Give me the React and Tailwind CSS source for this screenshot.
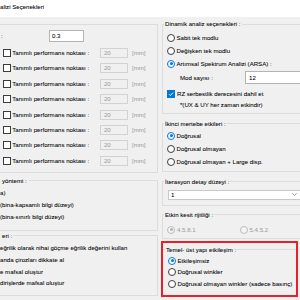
const LINE = "border-[#dcdcdc]";

function Radio({ checked = false, disabled = false }) {
  const ring = disabled
    ? "border-[#bcbcbc] bg-[#f4f4f4]"
    : checked
    ? "border-[#0078d7] bg-white"
    : "border-[#3c3c3c] bg-white";
  const dot = disabled ? "bg-[#b4b4b4]" : "bg-[#0078d7]";
  return (
    <span className={`flex h-[8px] w-[8px] shrink-0 items-center justify-center rounded-full border ${ring}`}>
      {checked && <span className={`h-[3px] w-[3px] rounded-full ${dot}`} />}
    </span>
  );
}

function Check({ checked = false }) {
  if (checked) {
    return (
      <span className="flex h-[8px] w-[8px] shrink-0 items-center justify-center bg-[#0078d7]">
        <svg width="6" height="6" viewBox="0 0 6 6">
          <path d="M1 3.2 L2.4 4.6 L5 1.6" fill="none" stroke="white" strokeWidth="0.9" />
        </svg>
      </span>
    );
  }
  return <span className="h-[8px] w-[8px] shrink-0 border border-[#3c3c3c] bg-white" />;
}

function PerfRow() {
  return (
    <div className="flex h-[15.4px] items-center pl-[3px]">
      <Check />
      <span className="ml-[1.3px] w-[87.7px] whitespace-nowrap">Tanımlı performans noktası :</span>
      <div className="flex h-[10px] w-[28px] items-center border border-[#d2d2d2] pl-[3px] text-[#a0a0a0]">20</div>
      <span className="ml-[4px] text-[#a0a0a0]">[mm]</span>
    </div>
  );
}

function RadioRow({ label, checked, h = "h-[12.8px]" }) {
  return (
    <div className={`flex ${h} items-center pl-[3px]`}>
      <Radio checked={checked} />
      <span className="ml-[1.5px] whitespace-nowrap">{label}</span>
    </div>
  );
}

export default function App() {
  return (
    <div className="h-[300px] w-[300px] overflow-hidden bg-[#f0f0f0] font-['Liberation_Sans',Arial,sans-serif] text-[6.1px] leading-none text-black [-webkit-text-stroke:0.05px_currentColor]">
      <div className="h-[17px] bg-white pt-[3px] leading-[7px]">alizi Seçenekleri</div>

      <div className="flex">
        {/* left column */}
        <div className="w-[158px] shrink-0">
          <div className={`mt-[7px] border-y border-r ${LINE} pt-[5px] pb-[3.5px]`}>
            <div className="flex h-[12px] items-center">
              <span className="w-[49px] pl-[1px]">:</span>
              <div className="flex h-[12px] w-[35px] items-center border border-[#b4b4b4] bg-white pl-[2px]">0.3</div>
            </div>
            <div className="mt-[3.3px]">
              {Array.from({ length: 8 }).map((_, i) => (
                <PerfRow key={i} />
              ))}
            </div>
          </div>

          <fieldset className={`mt-[3px] border-y border-r border-l-0 ${LINE} pt-[1.5px] pb-[6.5px]`}>
            <legend className="pl-[2px] pr-[2px] leading-[10px]">yöntemi :</legend>
            <div className="flex h-[12px] items-center">a)</div>
            <div className="flex h-[12px] items-center whitespace-nowrap">(bina-kapsamlı bilgi düzeyi)</div>
            <div className="flex h-[12px] items-center whitespace-nowrap">(bina-sınırlı bilgi düzeyi)</div>
          </fieldset>

          <fieldset className={`border-y border-r border-l-0 ${LINE} pt-[1.6px] pb-[5.6px]`}>
            <legend className="pl-[2px] pr-[2px] leading-[10px]">eri :</legend>
            <div className="flex h-[11.7px] items-center whitespace-nowrap">eğrilik olarak nihai göçme eğrilik değerini kullan</div>
            <div className="flex h-[11.7px] items-center whitespace-nowrap">anda çirozları dikkate al</div>
            <div className="flex h-[11.7px] items-center whitespace-nowrap">e mafsal oluştur</div>
            <div className="flex h-[11.7px] items-center whitespace-nowrap">dirişlerde mafsal oluştur</div>
          </fieldset>
        </div>

        {/* right column */}
        <div className="ml-[4px] w-[150px] shrink-0">
          <fieldset className={`mt-[2px] border ${LINE} pl-[1px] pt-[2.6px] pb-[2.5px]`}>
            <legend className="px-[1px] leading-[10px]">Dinamik analiz seçenekleri :</legend>
            <RadioRow label="Sabit tek modlu" />
            <RadioRow label="Değişken tek modlu" />
            <RadioRow label="Artımsal Spektrum Analizi (ARSA) :" checked />
            <div className="mt-[1.5px] flex h-[13px] items-center">
              <span className="w-[81px] pl-[16px] whitespace-nowrap">Mod sayısı :</span>
              <div className="flex h-[13px] w-[70px] items-center border border-[#b4b4b4] bg-white pl-[3px]">12</div>
            </div>
            <div className="mt-[4px] flex h-[11px] items-center pl-[3px]">
              <Check checked />
              <span className="ml-[2px] whitespace-nowrap">RZ serbestlik derecesini dahil et</span>
            </div>
            <div className="flex h-[11px] items-center pl-[16px] whitespace-nowrap">*(UX &amp; UY her zaman etkindir)</div>
          </fieldset>

          <fieldset className={`mt-[5px] border ${LINE} pl-[1px] pt-[0.5px] pb-[3px]`}>
            <legend className="px-[1px] leading-[10px]">İkinci mertebe etkileri :</legend>
            <RadioRow label="Doğrusal" checked h="h-[13px]" />
            <RadioRow label="Doğrusal olmayan" h="h-[13px]" />
            <RadioRow label="Doğrusal olmayan + Large disp." h="h-[13px]" />
          </fieldset>

          <fieldset className={`mt-[4.5px] border ${LINE} pl-[1px] pb-[5px]`}>
            <legend className="px-[1px] leading-[10px]">İterasyon detay düzeyi :</legend>
            <div className="ml-[4px] mt-[3px] flex h-[10px] w-[135px] items-center justify-between border border-[#c8c8c8] bg-white pl-[2px] pr-[5px]">
              <span>1</span>
              <svg width="5" height="3" viewBox="0 0 5 3">
                <path d="M0.3 0.3 L2.5 2.5 L4.7 0.3" fill="none" stroke="#707070" strokeWidth="0.7" />
              </svg>
            </div>
          </fieldset>

          <fieldset className={`mt-[4px] border ${LINE} pl-[1px] pb-[3px]`}>
            <legend className="px-[1px] leading-[10px]">Etkin kesit rijitliği :</legend>
            <div className="mt-[5px] flex h-[10px] items-center pl-[3px] text-[#a0a0a0]">
              <div className="flex w-[73px] items-center">
                <Radio checked disabled />
                <span className="ml-[2px]">4.5.8.1</span>
              </div>
              <Radio disabled />
              <span className="ml-[1.5px]">5.4.5.2</span>
            </div>
          </fieldset>

          <div className="-ml-[1px] mt-[2px] h-[56px] w-[137px] border-2 border-[#e8202a]">
            <fieldset className={`mt-[2px] border-t ${LINE} pl-[2px] pt-[0.25px]`}>
              <legend className="px-[1px] leading-[10px]">Temel- üst yapı etkileşim :</legend>
              <RadioRow label="Etkileşimsiz" checked h="h-[11.5px]" />
              <RadioRow label="Doğrusal winkler" h="h-[11.5px]" />
              <RadioRow label="Doğrusal olmayan winkler (sadece basınç)" h="h-[11.5px]" />
            </fieldset>
          </div>
        </div>
      </div>
    </div>
  );
}
